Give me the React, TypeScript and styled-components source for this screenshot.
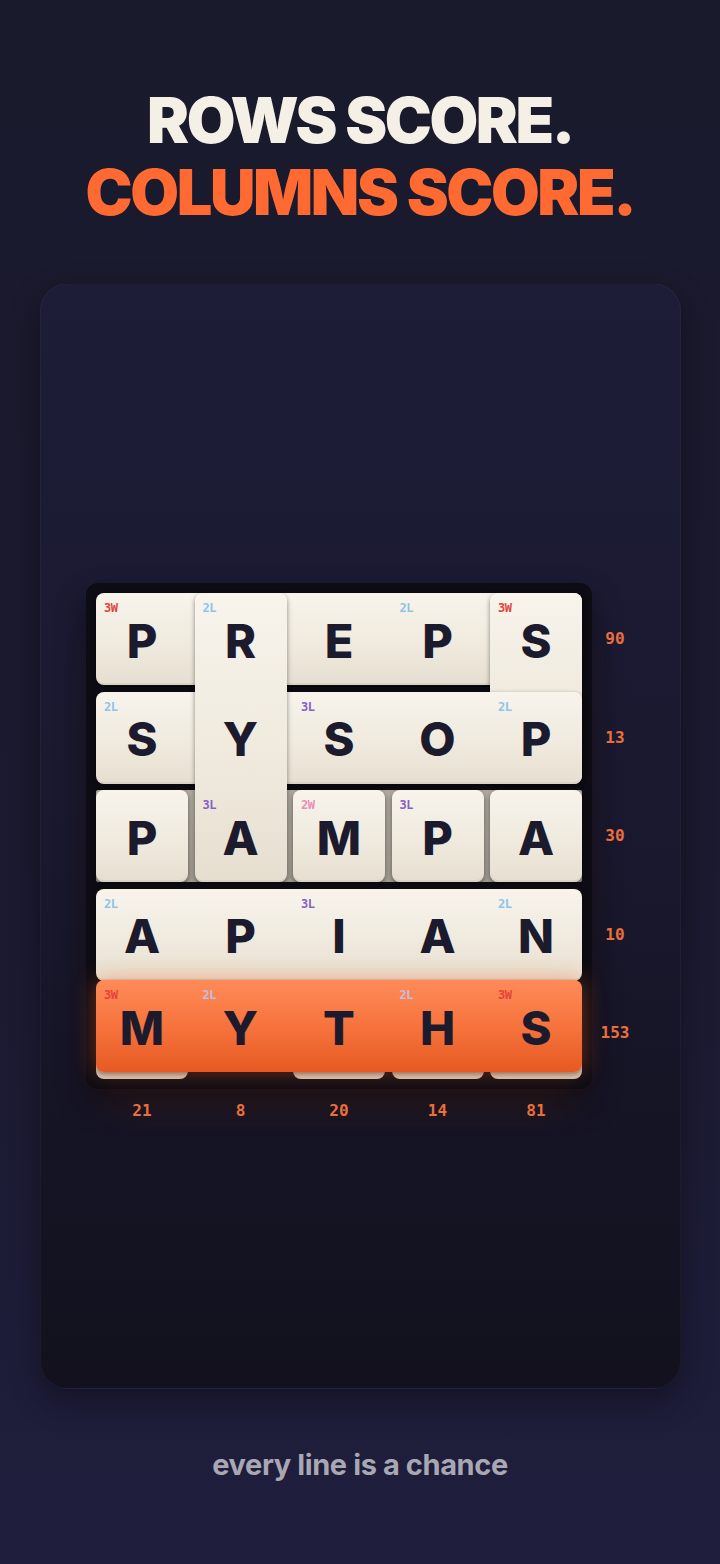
import React from 'react';
import styled, { createGlobalStyle, css } from 'styled-components';

type Bonus = '3W' | '2W' | '3L' | '2L';
type Cell = { letter?: string; bonus?: Bonus };
type TileDef = {
  row: number;
  col: number;
  rows?: number;
  cols?: number;
  tone?: 'cream' | 'orange' | 'shade' | 'under';
  lift?: boolean;
  cells: Cell[];
};

const CELL = 92;
const GAP = 6.5;

const tiles: TileDef[] = [
  // row 3 backing strip (shows through the gaps)
  { row: 3, col: 1, cols: 5, tone: 'shade', cells: [] },
  // under-tiles peeking below the highlighted row
  { row: 5, col: 1, tone: 'under', cells: [{}] },
  { row: 5, col: 3, tone: 'under', cells: [{}] },
  { row: 5, col: 4, tone: 'under', cells: [{}] },
  { row: 5, col: 5, tone: 'under', cells: [{}] },
  {
    row: 1, col: 1, cols: 5,
    cells: [{ letter: 'P', bonus: '3W' }, {}, { letter: 'E' }, { letter: 'P', bonus: '2L' }, {}],
  },
  { row: 1, col: 5, rows: 2, cells: [{ letter: 'S', bonus: '3W' }, {}] },
  {
    row: 2, col: 1, cols: 5,
    cells: [{ letter: 'S', bonus: '2L' }, {}, { letter: 'S', bonus: '3L' }, { letter: 'O' }, { letter: 'P', bonus: '2L' }],
  },
  { row: 3, col: 1, cells: [{ letter: 'P' }] },
  { row: 3, col: 3, cells: [{ letter: 'M', bonus: '2W' }] },
  { row: 3, col: 4, cells: [{ letter: 'P', bonus: '3L' }] },
  { row: 3, col: 5, cells: [{ letter: 'A' }] },
  {
    row: 1, col: 2, rows: 3,
    cells: [{ letter: 'R', bonus: '2L' }, { letter: 'Y' }, { letter: 'A', bonus: '3L' }],
  },
  {
    row: 4, col: 1, cols: 5,
    cells: [{ letter: 'A', bonus: '2L' }, { letter: 'P' }, { letter: 'I', bonus: '3L' }, { letter: 'A' }, { letter: 'N', bonus: '2L' }],
  },
  {
    row: 5, col: 1, cols: 5, tone: 'orange', lift: true,
    cells: [{ letter: 'M', bonus: '3W' }, { letter: 'Y', bonus: '2L' }, { letter: 'T' }, { letter: 'H', bonus: '2L' }, { letter: 'S', bonus: '3W' }],
  },
];

const rowScores = [90, 13, 30, 10, 153];
const colScores = [21, 8, 20, 14, 81];

const App: React.FC = () => {
  return (
    <Page>
      <GlobalStyle />
      <Title>
        <TitleLine>ROWS SCORE.</TitleLine>
        <TitleLine $accent>COLUMNS SCORE.</TitleLine>
      </Title>

      <Card>
        <Play>
          <Board>
            {tiles.map((t, i) => (
              <Tile
                key={i}
                $row={t.row}
                $col={t.col}
                $rows={t.rows ?? 1}
                $cols={t.cols ?? 1}
                $tone={t.tone ?? 'cream'}
                $lift={!!t.lift}
              >
                {t.cells.map((c, j) => (
                  <Slot key={j}>
                    {c.bonus && (
                      <BonusTag $bonus={c.bonus} $onOrange={t.tone === 'orange'}>
                        {c.bonus}
                      </BonusTag>
                    )}
                    {c.letter && <Letter>{c.letter}</Letter>}
                  </Slot>
                ))}
              </Tile>
            ))}
          </Board>
          <RowScores>
            {rowScores.map((s, i) => (
              <Score key={i}>{s}</Score>
            ))}
          </RowScores>
          <ColScores>
            {colScores.map((s, i) => (
              <Score key={i}>{s}</Score>
            ))}
          </ColScores>
        </Play>
      </Card>

      <Tagline>every line is a chance</Tagline>
    </Page>
  );
};

export default App;

const GlobalStyle = createGlobalStyle`
  html, body {
    margin: 0;
    padding: 0;
    background: #1b1a2f;
  }
  * { box-sizing: border-box; }
`;

const Page = styled.div`
  width: 720px;
  height: 1564px;
  overflow: hidden;
  background: linear-gradient(180deg, #1a1a2d 0%, #1b1a30 60%, #1f1e3d 100%);
  font-family: Inter, 'Noto Sans', sans-serif;
  display: flex;
  flex-direction: column;
  align-items: center;
  padding-top: 89px;
`;

const Title = styled.h1`
  margin: 0;
  text-align: center;
  font-weight: 900;
  font-size: 63px;
  line-height: 63px;
  letter-spacing: -2.4px;
  display: flex;
  flex-direction: column;
  gap: 9px;
`;

const TitleLine = styled.div<{ $accent?: boolean }>`
  color: ${(p) => (p.$accent ? '#ff6a33' : '#f5f0e6')};
`;

const Card = styled.div`
  margin-top: 59px;
  width: 641px;
  height: 1106px;
  flex-shrink: 0;
  border-radius: 28px;
  border: 1px solid rgba(255, 255, 255, 0.035);
  background: linear-gradient(180deg, #1e1d38 0%, #1a1930 45%, #12111d 100%);
  box-shadow: 0 12px 30px rgba(0, 0, 0, 0.35);
  display: flex;
  justify-content: center;
  align-items: flex-start;
  padding-top: 299px;
`;

const Play = styled.div`
  display: grid;
  grid-template-columns: auto 44px;
  grid-template-rows: auto auto;
  align-items: start;
  margin-left: 2px;
`;

const gridTracks = css`
  display: grid;
  grid-template-columns: repeat(5, ${CELL}px);
  column-gap: ${GAP}px;
`;

const Board = styled.div`
  ${gridTracks};
  grid-template-rows: repeat(5, ${CELL}px);
  row-gap: ${GAP}px;
  padding: 10px;
  background: #0d0c14;
  border-radius: 12px;
  box-shadow: 0 14px 30px rgba(0, 0, 0, 0.45), 0 30px 40px -20px rgba(230, 90, 30, 0.2);
`;

const tones = {
  cream: css`
    background: linear-gradient(180deg, #f8f4ec 0%, #efe9dd 60%, #e6dfd0 100%);
    box-shadow: 0 2px 5px rgba(0, 0, 0, 0.45), inset 0 -2px 0 rgba(0, 0, 0, 0.05);
  `,
  orange: css`
    background: linear-gradient(180deg, #ff8b58 0%, #f7733d 50%, #e65a22 100%);
    box-shadow: 0 0 22px rgba(255, 100, 40, 0.45), 0 2px 4px rgba(0, 0, 0, 0.4);
  `,
  shade: css`
    background: linear-gradient(180deg, #b0aa9f 0%, #a39d93 100%);
    border-radius: 2px;
  `,
  under: css`
    background: linear-gradient(180deg, #e6dfd2 0%, #cfc6b7 100%);
  `,
};

const Tile = styled.div<{
  $row: number;
  $col: number;
  $rows: number;
  $cols: number;
  $tone: keyof typeof tones;
  $lift: boolean;
}>`
  grid-row: ${(p) => p.$row} / span ${(p) => p.$rows};
  grid-column: ${(p) => p.$col} / span ${(p) => p.$cols};
  border-radius: 8px;
  display: grid;
  grid-template-columns: repeat(${(p) => p.$cols}, ${CELL}px);
  grid-template-rows: repeat(${(p) => p.$rows}, ${CELL}px);
  gap: ${GAP}px;
  ${(p) => tones[p.$tone]};
  ${(p) => p.$lift && 'transform: translateY(-7px);'}
`;

const Slot = styled.div`
  position: relative;
  display: flex;
  align-items: center;
  justify-content: center;
`;

const Letter = styled.span`
  font-family: Inter, 'Noto Sans', sans-serif;
  font-weight: 800;
  font-size: 47px;
  line-height: 1;
  color: #1c1b2e;
  margin-top: 2px;
`;

const bonusColors: Record<Bonus, string> = {
  '3W': '#e2453b',
  '2W': '#ec8db5',
  '3L': '#8661c6',
  '2L': '#8ec4ec',
};

const BonusTag = styled.span<{ $bonus: Bonus; $onOrange: boolean }>`
  position: absolute;
  top: 8px;
  left: 8px;
  font-family: 'DejaVu Sans Mono', 'Liberation Mono', monospace;
  font-size: 12px;
  font-weight: 600;
  letter-spacing: -0.5px;
  color: ${(p) => (p.$onOrange && p.$bonus === '2L' ? '#bfc0e0' : bonusColors[p.$bonus])};
`;

const RowScores = styled.div`
  display: grid;
  grid-template-rows: repeat(5, ${CELL}px);
  row-gap: ${GAP}px;
  padding: 10px 0;
  align-items: center;
  justify-items: center;
  margin-left: 2px;
`;

const ColScores = styled.div`
  ${gridTracks};
  padding: 12px 10px 0;
  justify-items: center;
`;

const Score = styled.span`
  font-family: 'DejaVu Sans Mono', 'Liberation Mono', monospace;
  font-size: 16px;
  font-weight: 600;
  color: #ea6f3a;
  line-height: 20px;
`;

const Tagline = styled.p`
  margin: 58px 0 0;
  font-family: Inter, 'Noto Sans', sans-serif;
  font-weight: 700;
  font-size: 29px;
  letter-spacing: -0.4px;
  color: #a8a7b3;
`;
